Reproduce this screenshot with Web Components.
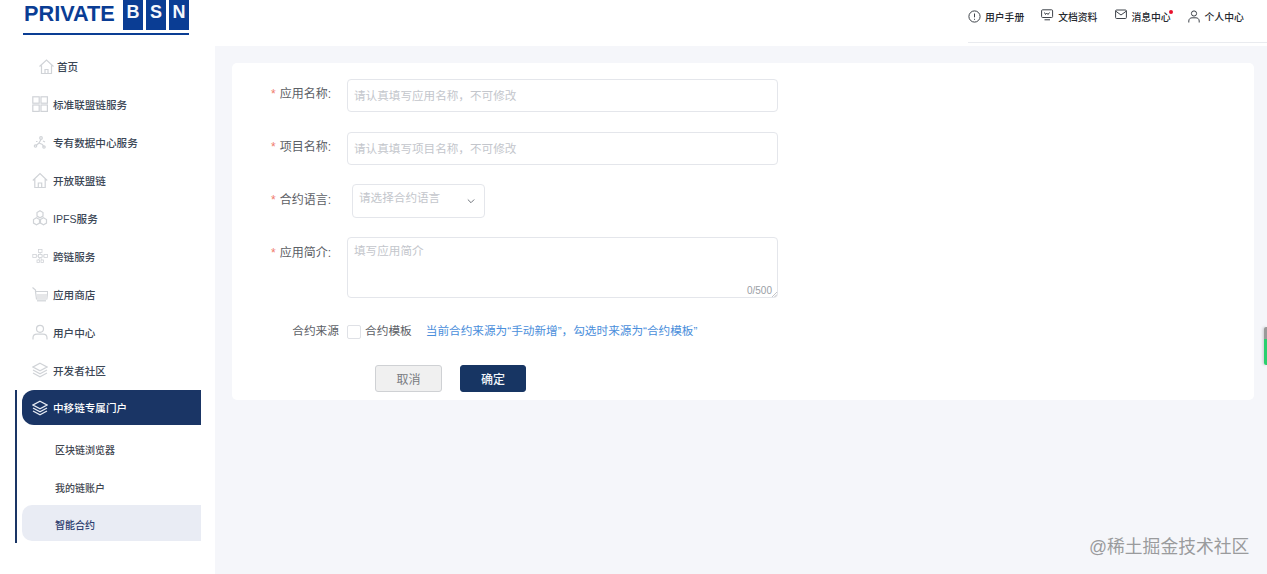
<!DOCTYPE html>
<html lang="zh-CN"><head><meta charset="utf-8"><title>BSN</title>
<style>
html,body{margin:0;padding:0;height:574px;overflow:hidden;background:#fff}
body{font-family:"Liberation Sans","Noto Sans CJK SC",sans-serif}
</style></head>
<body>
<bsn-app></bsn-app>
<script>
const ICON = {
 home:'<path d="M1.5 8.500 8.500 2l7 6.500M3.500 7.500V15.500h10V7.500M7 15.500v-4h3v4"/>',
 grid:'<rect x=".8" y=".8" width="6.400" height="6.400"/><rect x="9" y=".8" width="6.400" height="6.400"/><rect x=".8" y="9" width="6.400" height="6.400"/><rect x="9" y="9" width="6.400" height="6.400"/>',
 dots:'<circle cx="9" cy="4" r="1.300"/><path d="M9 5.500 7 9l3.500 1.500M7 9l-3 2.500M10.500 10.500l1 2M4 7.500h1.500M11 7l2 1"/><circle cx="3.500" cy="12" r="1.200"/><circle cx="12" cy="13" r="1.200"/>',
 house:'<path d="M.8 8.500 8 1.500l7.200 7M2.800 7v8.500h10.400V7M6.300 15.500v-4.500h3.400v4.500"/>',
 hex:'<path d="M8 .8l3 1.700v3.600L8 7.800 5 6.100V2.500zM4.500 7.800l3 1.700v3.600l-3 1.700-3-1.700V9.500zM11.500 7.800l3 1.700v3.600l-3 1.700-3-1.700V9.500z"/>',
 net:'<g stroke-width=".8"><rect x="6.500" y="1.500" width="3.500" height="3"/><rect x=".8" y="6.500" width="3.500" height="3"/><rect x="12" y="6.500" width="3.500" height="3"/><rect x="6.500" y="6.500" width="3.500" height="3"/><rect x="5" y="12" width="2.500" height="2.500"/><rect x="9" y="12" width="2.500" height="2.500"/><path d="M8.200 4.500v2M4.300 8h2.200M10 8h2M8 9.500l-1.500 2.500M8.500 9.500l1.500 2.500"/></g>',
 cart:'<path d="M.5 1.500 3.500 4v1.500h12.300l-1 7.500H4.500L3.500 5.500"/><path d="M4.500 8h10.700l-.4 5H4.800z" fill="#e6e7e9" stroke="none"/><path d="M5 14.800h9"/>',
 user:'<circle cx="8" cy="4.800" r="3.500"/><path d="M1 15.500v-1.500c0-2.500 2-3.800 4-3.800h6c2 0 4 1.300 4 3.800v1.500"/>',
 layers:'<path d="M8 1.200 15 5 8 8.800 1 5zM1 8l7 3.800L15 8M1 11l7 3.800L15 11"/>',
 help:'<circle cx="6.500" cy="6.500" r="5.600"/><path d="M6.500 3.500v3.800M6.500 8.800v1"/>',
 monitor:'<rect x=".6" y=".8" width="11" height="7.700" rx="1"/><path d="M3.500 10.800h5.500M3.500 3.500l1 2 1.200-1.500L7 5.500l1.500-2"/>',
 mail:'<rect x=".6" y="1" width="10.800" height="8.500" rx="1"/><path d="M.8 2.200 6 6l5.200-3.800"/>',
 person:'<circle cx="6" cy="3.500" r="2.600"/><path d="M.8 12.500v-1.500c0-2 1.500-3.200 3.200-3.200h4c1.700 0 3.200 1.200 3.200 3.200v1.500"/>'
};
const svg=(n,w,vb,color,sw)=>`<svg width="${w}" height="${w}" viewBox="0 0 ${vb} ${vb}" fill="none" stroke="${color}" stroke-width="${sw}" aria-hidden="true">${ICON[n]}</svg>`;

class BsnLogo extends HTMLElement{constructor(){super();this.attachShadow({mode:'open'}).innerHTML=`<style>
:host{display:block;width:166px;margin-left:23px;height:36px;color:#0a3d94;font:700 21.700px/25px "Liberation Sans",sans-serif}
.r{display:flex;height:33px;align-items:flex-start}
.t{width:99px;padding:1px 0 0 1px;box-sizing:border-box;white-space:nowrap}
.b{display:flex;gap:3px;margin-left:1px}
.b span{width:20px;height:30px;box-sizing:border-box;padding-top:2px;background:#0a3d94;color:#f4f7fc;text-align:center;line-height:21px;font-size:18px}
.l{height:2px;background:#0a3d94}
</style><div class="r"><div class="t">PRIVATE</div><div class="b"><span>B</span><span>S</span><span>N</span></div></div><div class="l"></div>`}}
customElements.define('bsn-logo',BsnLogo);

class NavItem extends HTMLElement{constructor(){super();this.attachShadow({mode:'open'})}
connectedCallback(){const a=this.hasAttribute('active');const ic=this.getAttribute('icon');const h=ic==='home';
this.shadowRoot.innerHTML=`<style>
:host{display:flex;align-items:center;height:38px;box-sizing:border-box;padding:0 0 2px ${h?16:10}px;gap:${h?2:5}px;font-size:10.600px;font-weight:500;color:#3b4655;white-space:nowrap}
:host([active]){height:35px;padding-bottom:0;background:#1a3565;color:#fff;border-radius:12px 0 0 12px}
svg{flex:none;display:block}
</style>${svg(ic,h?17:16,h?17:16,a?'#e8ecf4':'#d0d3d7',a?1.3:1.2)}<slot></slot>`}}
customElements.define('nav-item',NavItem);

class SubItem extends HTMLElement{constructor(){super();this.attachShadow({mode:'open'}).innerHTML=`<style>
:host{display:flex;align-items:center;height:38px;box-sizing:border-box;padding:0 0 2px 33px;font-size:10px;font-weight:500;color:#3f4650;white-space:nowrap}
:host([active]){height:36px;margin-top:-2px;padding:3px 0 0 33px;background:#e9ecf4;color:#2d3c6e;border-radius:10px 0 0 10px}
</style><slot></slot>`}}
customElements.define('sub-item',SubItem);

class NavGroup extends HTMLElement{constructor(){super();this.attachShadow({mode:'open'}).innerHTML=`<style>
:host{display:block;margin-left:-7px;border-left:2px solid #1a3565;padding:0 0 2px 5px}
.s{padding-top:6px;display:block}
</style><slot name="head"></slot><div class="s"><slot></slot></div>`}}
customElements.define('nav-group',NavGroup);

class BsnSidebar extends HTMLElement{constructor(){super();this.attachShadow({mode:'open'}).innerHTML=`<style>
:host{display:block;width:215px;flex:none;background:#fff;height:574px;box-sizing:border-box}
nav{display:block;width:179px;margin-left:22px;padding-top:12px}
</style><bsn-logo></bsn-logo><nav><slot></slot></nav>`}}
customElements.define('bsn-sidebar',BsnSidebar);

class TopLink extends HTMLElement{constructor(){super();this.attachShadow({mode:'open'})}
connectedCallback(){this.shadowRoot.innerHTML=`<style>
:host{display:flex;align-items:center;gap:${this.getAttribute('gap')||4}px;font-size:9.800px;font-weight:500;color:#24282e;white-space:nowrap;position:relative}
svg{display:block;flex:none;margin-top:${this.getAttribute('up')||0}px}
.d{position:absolute;right:-2px;top:0;width:4px;height:4px;border-radius:50%;background:#e8112d;display:${this.hasAttribute('dot')?'block':'none'}}
</style>${svg(this.getAttribute('icon'),13,13,'#3d4249',1)}<slot></slot><i class="d"></i>`}}
customElements.define('top-link',TopLink);

class BsnTopbar extends HTMLElement{constructor(){super();this.attachShadow({mode:'open'}).innerHTML=`<style>
:host{display:block;height:46px;background:#fff;box-sizing:border-box;padding-left:753px}
.w{height:43px;box-sizing:border-box;border-bottom:1px solid #e9ebef;display:flex;align-items:flex-start;gap:17px;padding-top:10px}
</style><div class="w"><slot></slot></div>`}}
customElements.define('bsn-topbar',BsnTopbar);

class FormRow extends HTMLElement{constructor(){super();this.attachShadow({mode:'open'})}
connectedCallback(){const req=this.hasAttribute('required');const lh=this.getAttribute('lh')||31;
this.shadowRoot.innerHTML=`<style>
:host{display:flex;align-items:flex-start;margin-bottom:${this.getAttribute('mb')||20}px}
.l{width:99px;margin-right:16px;flex:none;text-align:right;font-size:12px;line-height:${lh}px;color:#5c6066;white-space:nowrap}
.l b{font-weight:400;color:#ef7a6e;margin-right:4px}
</style><div class="l">${req?'<b>*</b>':''}<slot name="label"></slot></div><slot></slot>`}}
customElements.define('form-row',FormRow);

class TextField extends HTMLElement{constructor(){super();this.attachShadow({mode:'open'}).innerHTML=`<style>
:host{display:flex;align-items:center;width:431px;height:33px;box-sizing:border-box;border:1px solid #e4e6eb;border-radius:4px;padding:0 6px 2px;font-size:11.600px;color:#c3c6cc;white-space:nowrap;background:#fff}
</style><slot></slot>`}}
customElements.define('text-field',TextField);

class SelectField extends HTMLElement{constructor(){super();this.attachShadow({mode:'open'}).innerHTML=`<style>
:host{display:flex;justify-content:space-between;width:133px;height:34px;margin-left:5px;box-sizing:border-box;border:1px solid #e4e6eb;border-radius:4px;padding:0 9px 0 6px;font-size:11.600px;line-height:26px;color:#c3c6cc;white-space:nowrap;background:#fff}
svg{margin-top:12px}
</style><slot></slot><svg width="8" height="8" viewBox="0 0 8 8" fill="none" stroke="#70757c" stroke-width="1"><path d="M.8 2.500 4 5.700l3.200-3.200"/></svg>`}}
customElements.define('select-field',SelectField);

class TextArea extends HTMLElement{constructor(){super();this.attachShadow({mode:'open'}).innerHTML=`<style>
:host{display:block;position:relative;width:431px;height:61px;box-sizing:border-box;border:1px solid #e4e6eb;border-radius:4px;padding:0 6px;font-size:11.600px;line-height:26px;color:#c3c6cc;white-space:nowrap;background:#fff}
.c{position:absolute;right:5px;bottom:-1px;font-size:10px;line-height:14px;color:#9a9ea5}
svg{position:absolute;right:0;bottom:0}
</style><slot></slot><span class="c">0/500</span><svg width="5" height="5" viewBox="0 0 5 5" stroke="#a9acb2" stroke-width=".7"><path d="M0 5 5 0M2.500 5 5 2.500"/></svg>`}}
customElements.define('text-area',TextArea);

class CheckRow extends HTMLElement{constructor(){super();this.attachShadow({mode:'open'}).innerHTML=`<style>
:host{display:flex;align-items:center;height:18px;margin-bottom:24px;font-size:11.700px;line-height:16px;white-space:nowrap;color:#5c6066}
.l{width:107px;margin-right:8px;text-align:right;flex:none}
.b{width:12px;height:12px;border:1px solid #dfe1e6;border-radius:2px;margin-right:4px;background:#fff;flex:none}
.n{margin-left:14px;color:#4a8edb;font-size:11.650px}
span{margin-top:-2px}
</style><span class="l"><slot name="label"></slot></span><i class="b"></i><span><slot></slot></span><span class="n"><slot name="note"></slot></span>`}}
customElements.define('check-row',CheckRow);

class BsnButton extends HTMLElement{constructor(){super();this.attachShadow({mode:'open'}).innerHTML=`<style>
:host{display:flex;align-items:center;justify-content:center;width:67px;height:27px;box-sizing:border-box;border:1px solid #cfd1d4;border-radius:3px;background:#f0f0f0;color:#787b80;font-size:12px}
:host([primary]){width:66px;background:#173563;border-color:#173563;color:#f2f5fa;font-weight:500}
</style><slot></slot>`}}
customElements.define('bsn-button',BsnButton);

class FormCard extends HTMLElement{constructor(){super();this.attachShadow({mode:'open'}).innerHTML=`<style>
:host{display:block;height:337px;box-sizing:border-box;background:#fff;border-radius:5px;padding-top:16px}
.a{display:flex;gap:18px;margin-left:143px}
</style><slot></slot><div class="a"><slot name="actions"></slot></div>`}}
customElements.define('form-card',FormCard);

class BsnApp extends HTMLElement{constructor(){super();this.attachShadow({mode:'open'}).innerHTML=`<style>
:host{display:flex;width:1267px;height:574px;position:relative;overflow:hidden;font-family:"Liberation Sans","Noto Sans CJK SC",sans-serif}
main{flex:1;min-width:0;background:#f5f6fa;height:574px}
.c{padding:17px 13px 0 17px}
.mark{position:absolute;left:1089px;top:536px;font-size:17.800px;line-height:22px;color:#9a9b9d;white-space:nowrap}
.tab{position:absolute;right:0;top:327px;width:3px;height:38px;background:linear-gradient(#9a9a9a 0 12px,#2ad06e 12px);box-shadow:-1px 0 3px rgba(0,0,0,.18);border-radius:2px 0 0 2px}
.m3{margin-left:1px}
</style>
<bsn-sidebar>
 <nav-item icon="home">首页</nav-item>
 <nav-item icon="grid">标准联盟链服务</nav-item>
 <nav-item icon="dots">专有数据中心服务</nav-item>
 <nav-item icon="house">开放联盟链</nav-item>
 <nav-item icon="hex">IPFS服务</nav-item>
 <nav-item icon="net">跨链服务</nav-item>
 <nav-item icon="cart">应用商店</nav-item>
 <nav-item icon="user">用户中心</nav-item>
 <nav-item icon="layers">开发者社区</nav-item>
 <nav-group>
  <nav-item slot="head" icon="layers" active>中移链专属门户</nav-item>
  <sub-item>区块链浏览器</sub-item>
  <sub-item>我的链账户</sub-item>
  <sub-item active>智能合约</sub-item>
 </nav-group>
</bsn-sidebar>
<main>
 <bsn-topbar>
  <top-link icon="help" up="-1">用户手册</top-link>
  <top-link icon="monitor" up="-3">文档资料</top-link>
  <top-link class="m3" icon="mail" gap="3" up="-3" dot>消息中心</top-link>
  <top-link icon="person" up="-2">个人中心</top-link>
 </bsn-topbar>
 <div class="c">
  <form-card>
   <form-row required><span slot="label">应用名称:</span><text-field>请认真填写应用名称，不可修改</text-field></form-row>
   <form-row required mb="19"><span slot="label">项目名称:</span><text-field>请认真填写项目名称，不可修改</text-field></form-row>
   <form-row required mb="19" lh="33"><span slot="label">合约语言:</span><select-field>请选择合约语言</select-field></form-row>
   <form-row required mb="25" lh="33"><span slot="label">应用简介:</span><text-area>填写应用简介</text-area></form-row>
   <check-row><span slot="label">合约来源</span>合约模板<span slot="note">当前合约来源为“手动新增”，勾选时来源为“合约模板”</span></check-row>
   <bsn-button slot="actions">取消</bsn-button>
   <bsn-button slot="actions" primary>确定</bsn-button>
  </form-card>
 </div>
</main>
<div class="tab"></div>
<div class="mark">@稀土掘金技术社区</div>`}}
customElements.define('bsn-app',BsnApp);
</script>
</body></html>
